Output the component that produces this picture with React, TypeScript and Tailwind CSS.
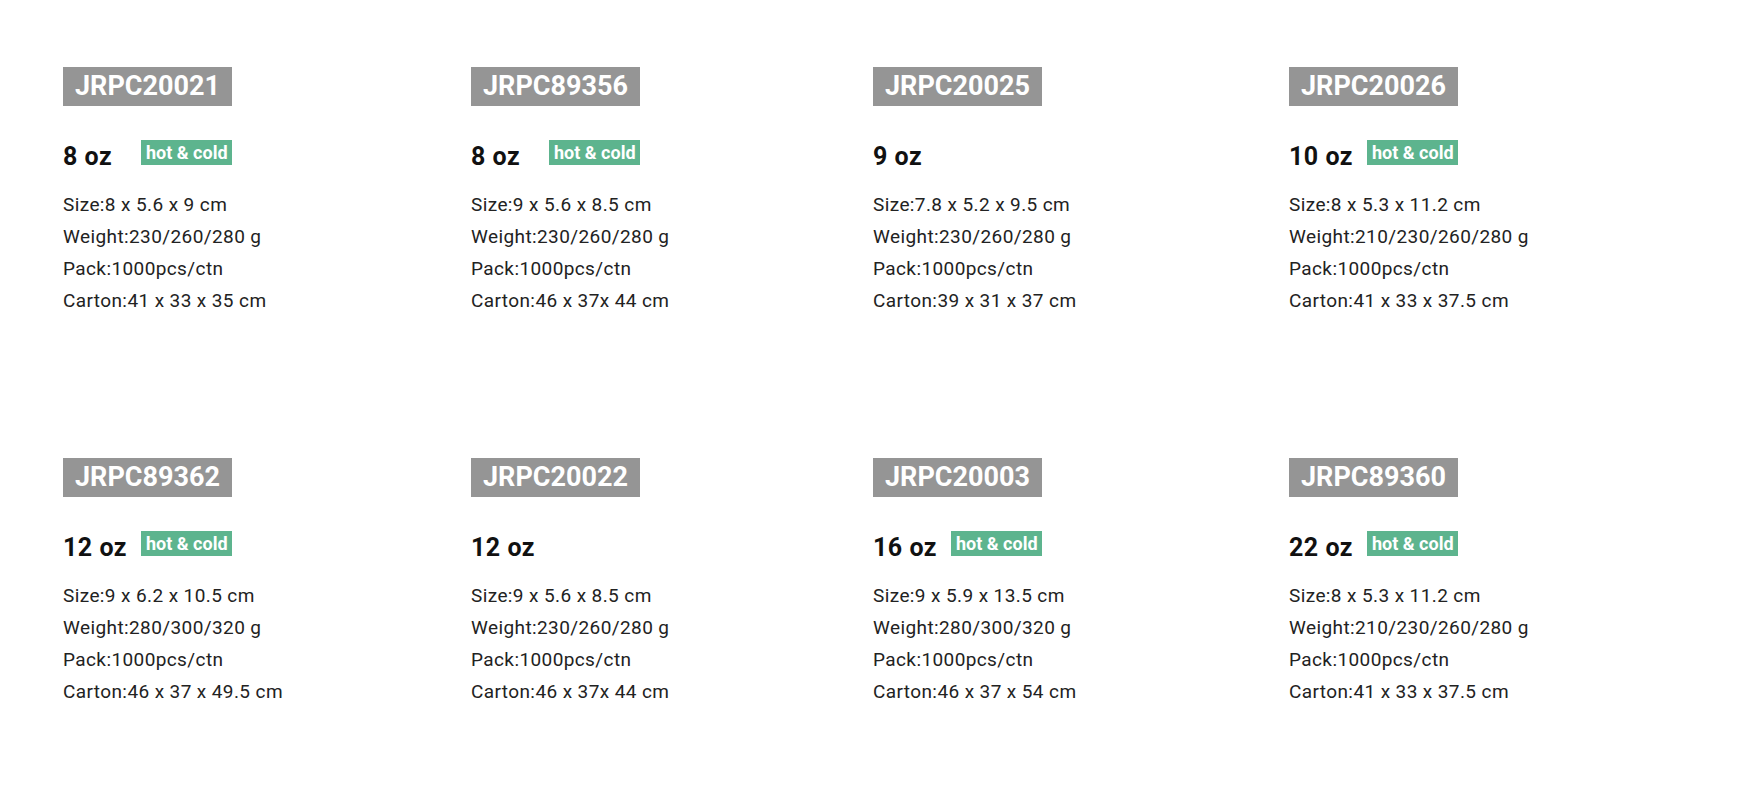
import React from "react";

interface Cup {
    code: string;
    oz: string;
    hotCold: boolean;
    size: string;
    weight: string;
    carton: string;
}

const cups: Cup[] = [
    { code: "JRPC20021", oz: "8 oz", hotCold: true, size: "8 x 5.6 x 9 cm", weight: "230/260/280 g", carton: "41 x 33 x 35 cm" },
    { code: "JRPC89356", oz: "8 oz", hotCold: true, size: "9 x 5.6 x 8.5 cm", weight: "230/260/280 g", carton: "46 x 37x 44 cm" },
    { code: "JRPC20025", oz: "9 oz", hotCold: false, size: "7.8 x 5.2 x 9.5 cm", weight: "230/260/280 g", carton: "39 x 31 x 37 cm" },
    { code: "JRPC20026", oz: "10 oz", hotCold: true, size: "8 x 5.3 x 11.2 cm", weight: "210/230/260/280 g", carton: "41 x 33 x 37.5 cm" },
    { code: "JRPC89362", oz: "12 oz", hotCold: true, size: "9 x 6.2 x 10.5 cm", weight: "280/300/320 g", carton: "46 x 37 x 49.5 cm" },
    { code: "JRPC20022", oz: "12 oz", hotCold: false, size: "9 x 5.6 x 8.5 cm", weight: "230/260/280 g", carton: "46 x 37x 44 cm" },
    { code: "JRPC20003", oz: "16 oz", hotCold: true, size: "9 x 5.9 x 13.5 cm", weight: "280/300/320 g", carton: "46 x 37 x 54 cm" },
    { code: "JRPC89360", oz: "22 oz", hotCold: true, size: "8 x 5.3 x 11.2 cm", weight: "210/230/260/280 g", carton: "41 x 33 x 37.5 cm" },
];

function CupCard({ cup }: { cup: Cup }) {
    return (
        <div className="flex flex-col items-start">
            <div className="bg-[#959595] text-white text-[27px] font-bold leading-[39px] pl-3 pr-3">
                {cup.code}
            </div>
            <div className="flex items-start mt-[34px]">
                <div className="w-[78px] mt-1 text-[25px] font-bold leading-[25px] tracking-[0.5px] text-[#111]">
                    {cup.oz}
                </div>
                {cup.hotCold && (
                    <div className="bg-[#5db48e] text-white text-[18px] font-bold leading-[25px] pl-[5px] pr-[4px]">
                        hot &amp; cold
                    </div>
                )}
            </div>
            <div className="mt-5 text-[19px] leading-[32px] tracking-[0.4px] text-[#222]">
                <div>Size:{cup.size}</div>
                <div>Weight:{cup.weight}</div>
                <div>Pack:1000pcs/ctn</div>
                <div>Carton:{cup.carton}</div>
            </div>
        </div>
    );
}

export default function App() {
    return (
        <div className="w-[1740px] h-[790px] bg-white font-['Roboto',sans-serif] pl-[63px] pt-[67px]">
            <div className="grid grid-cols-[408px_402px_416px_1fr] gap-y-[141px]">
                {cups.map((cup) => (
                    <CupCard key={cup.code} cup={cup} />
                ))}
            </div>
        </div>
    );
}
